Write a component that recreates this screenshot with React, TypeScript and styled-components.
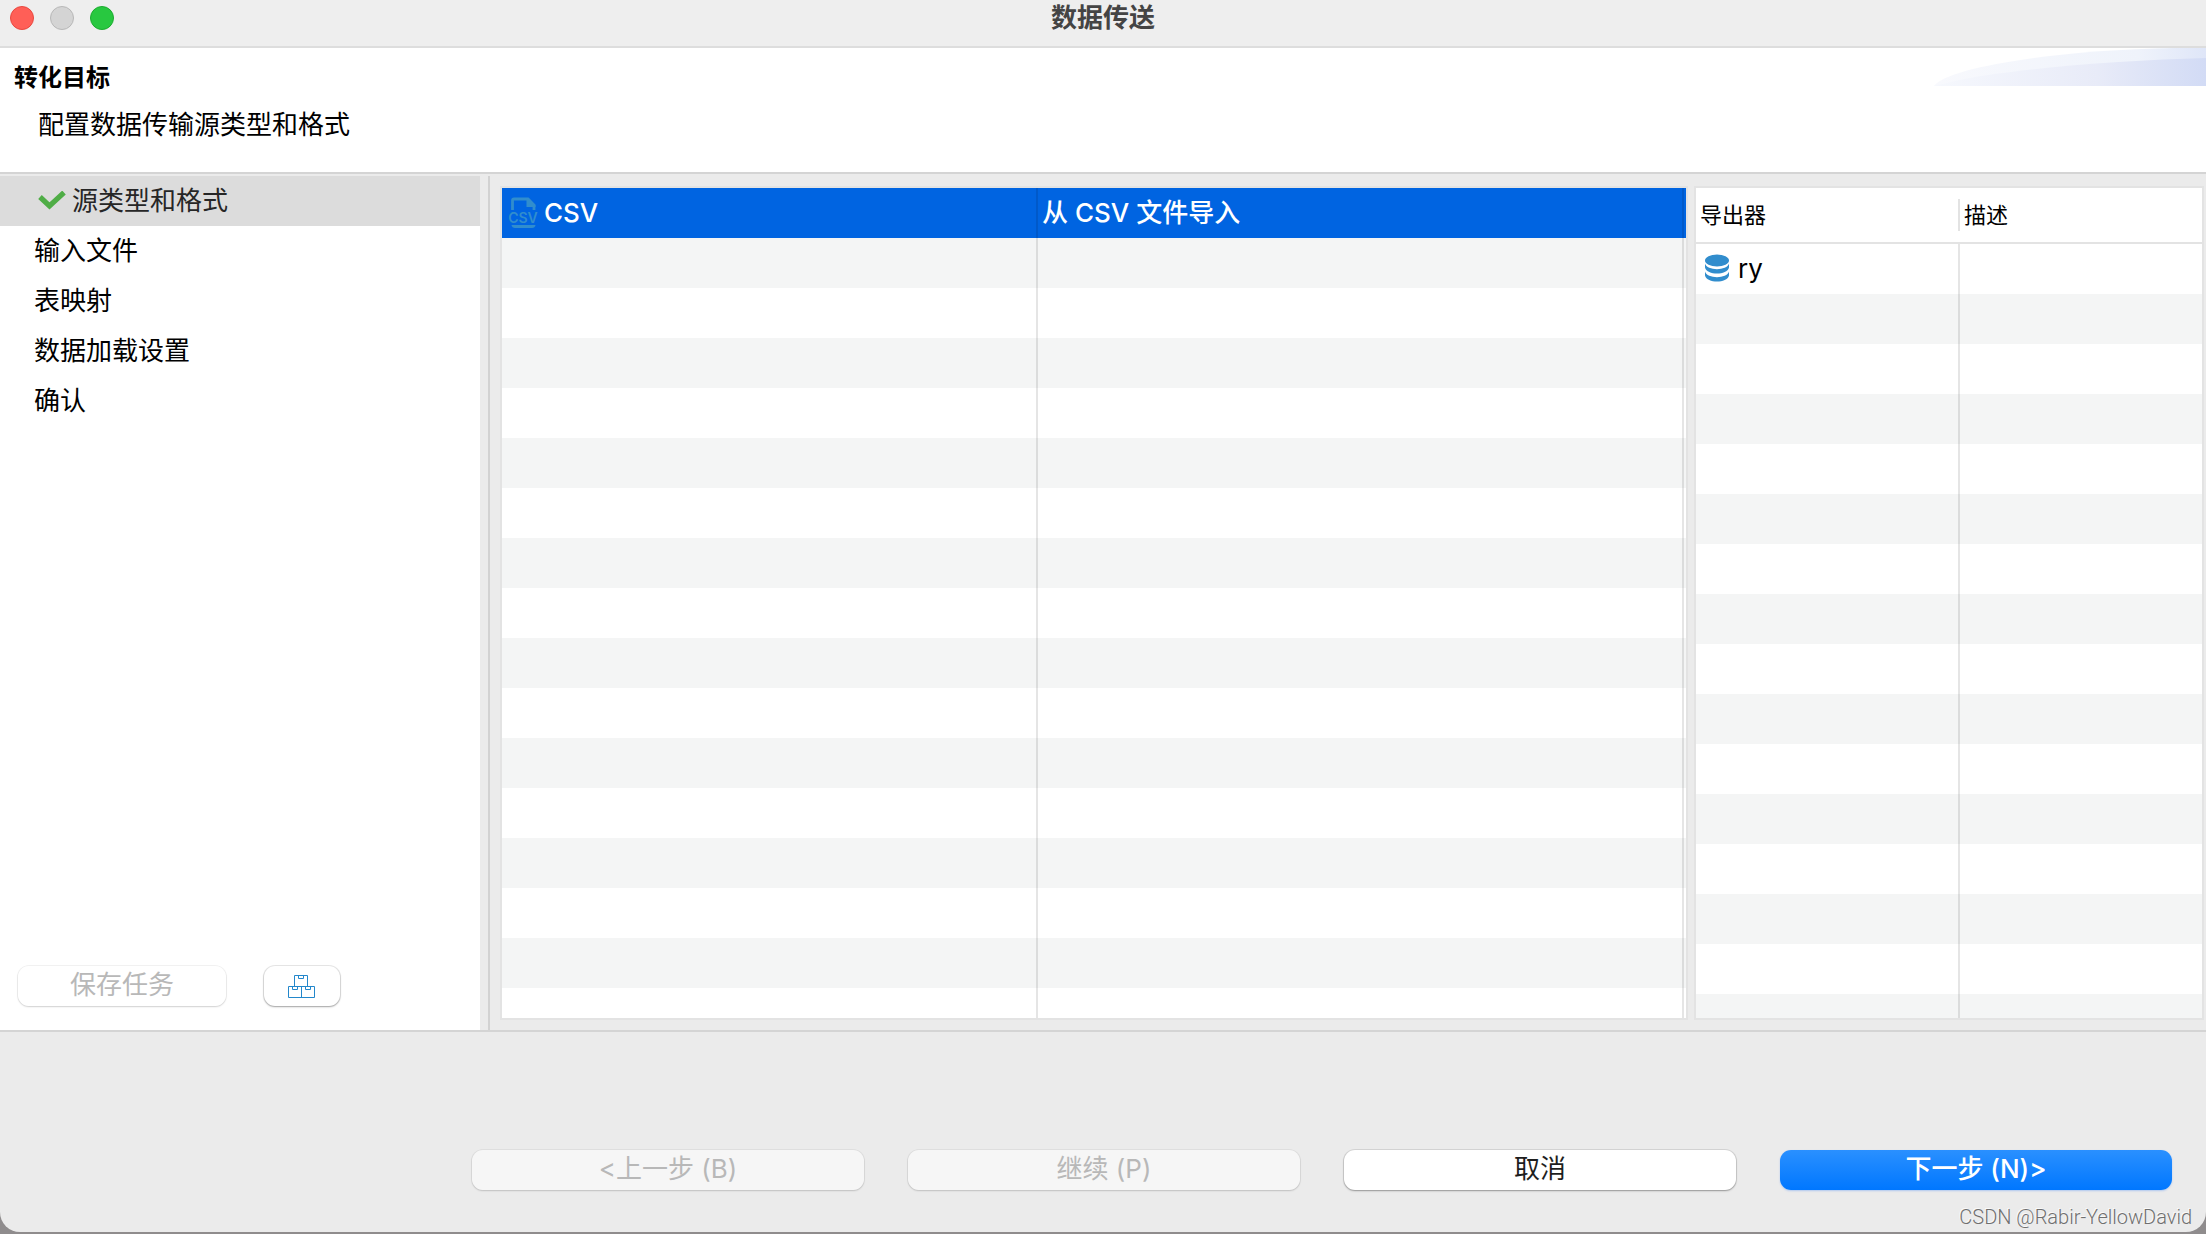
import React from "react";
import styled, { createGlobalStyle } from "styled-components";

const sans = `Inter, "Noto Sans CJK SC", sans-serif`;

const GlobalStyle = createGlobalStyle`
  *, *::before, *::after { box-sizing: border-box; }
  body {
    margin: 0;
    background: #8f8c8d;
    font-family: ${sans};
    font-size: 26px;
    line-height: 38px;
    color: #000;
  }
  button { font: inherit; }
`;

const Desktop = styled.div`
  height: 100vh;
  min-height: 640px;
  padding-bottom: 2px;
`;

const Window = styled.main`
  display: flex;
  flex-direction: column;
  height: 100%;
  overflow: hidden;
  background: #ebebeb;
  border-radius: 0 0 20px 20px;
`;

const TitleBar = styled.header`
  display: grid;
  grid-template-columns: 1fr auto 1fr;
  align-items: start;
  height: 48px;
  flex: none;
  background: #eeeeee;
  border-bottom: 2px solid #dddddd;
`;

const Lights = styled.div`
  display: flex;
  gap: 16px;
  padding: 6px 10px;
`;

const Light = styled.button<{ $fill: string; $edge: string }>`
  width: 24px;
  height: 24px;
  padding: 0;
  border: 1px solid ${(p) => p.$edge};
  border-radius: 50%;
  background: ${(p) => p.$fill};
`;

const WindowTitle = styled.h1`
  margin: 0;
  font-size: 26px;
  line-height: 36px;
  font-weight: 700;
  color: #444444;
`;

const Banner = styled.section`
  display: flex;
  justify-content: space-between;
  height: 126px;
  flex: none;
  background: #ffffff;
  border-bottom: 2px solid #d4d4d4;
`;

const BannerText = styled.div`
  padding: 12px 14px;
`;

const BannerTitle = styled.h2`
  margin: 0;
  font-size: 24px;
  line-height: 36px;
  font-weight: 700;
`;

const BannerNote = styled.p`
  margin: 10px 0 0;
  padding-left: 24px;
`;

const Swoosh = styled.svg`
  width: 272px;
  height: 38px;
  flex: none;
`;

const Body = styled.div`
  display: flex;
  flex: 1;
  min-height: 0;
  border-bottom: 2px solid #d4d4d4;
`;

const Sidebar = styled.aside`
  display: flex;
  flex-direction: column;
  justify-content: space-between;
  width: 480px;
  flex: none;
  margin-top: 2px;
  background: #ffffff;
`;

const Steps = styled.ol`
  margin: 0;
  padding: 0;
  list-style: none;
`;

const Step = styled.li<{ $current?: boolean }>`
  display: flex;
  align-items: center;
  gap: 6px;
  height: 50px;
  padding-left: ${(p) => (p.$current ? 38 : 34)}px;
  background: ${(p) => (p.$current ? "#dcdcdc" : "transparent")};
  color: ${(p) => (p.$current ? "#262626" : "#000000")};
`;

const TaskBar = styled.div`
  display: flex;
  gap: 38px;
  padding: 0 18px 24px;
`;

const Button = styled.button<{ $kind?: "primary" | "plain"; $width: number }>`
  display: flex;
  align-items: center;
  justify-content: center;
  width: ${(p) => p.$width}px;
  height: 40px;
  padding: 0 0 2px;
  border: 0;
  border-radius: 11px;
  color: ${(p) => (p.$kind === "primary" ? "#ffffff" : "#1e1e1e")};
  font-weight: ${(p) => (p.$kind === "primary" ? 500 : 400)};
  background: ${(p) =>
    p.$kind === "primary" ? "linear-gradient(#2a90ff, #0077ff)" : "#ffffff"};
  box-shadow: ${(p) =>
    p.$kind === "primary"
      ? "0 1px 2px rgba(0, 100, 255, 0.25)"
      : "0 0 0 1px rgba(0, 0, 0, 0.09), 0 1px 2px rgba(0, 0, 0, 0.3)"};

  &:disabled {
    color: #b8b8b8;
    background: rgba(255, 255, 255, 0.55);
    box-shadow: 0 0 0 1px rgba(0, 0, 0, 0.05), 0 1px 2px rgba(0, 0, 0, 0.14);
  }
`;

const Divider = styled.div`
  width: 10px;
  flex: none;
  margin-top: 2px;
  border-right: 2px solid #d2d2d2;
`;

const Panes = styled.div`
  display: flex;
  flex: 1;
  gap: 6px;
  min-width: 0;
  padding: 12px 2px 10px 10px;
`;

const Pane = styled.section<{ $grow?: boolean }>`
  flex: ${(p) => (p.$grow ? "1 1 0" : "0 0 510px")};
  min-width: 0;
  overflow: hidden;
  border: 2px solid #e3e3e3;
  background: #ffffff;
`;

const Table = styled.table`
  width: 100%;
  table-layout: fixed;
  border-collapse: separate;
  border-spacing: 0;
`;

const Col = styled.col<{ $width?: number }>`
  width: ${(p) => (p.$width ? `${p.$width}px` : "auto")};
`;

const HeadCell = styled.th`
  height: 56px;
  padding: 0;
  border-bottom: 2px solid #e3e3e3;
  font-size: 22px;
  line-height: 32px;
  font-weight: 400;
  text-align: left;
`;

const HeadLabel = styled.div<{ $divided?: boolean }>`
  padding-left: 4px;
  border-left: ${(p) => (p.$divided ? "2px solid #e3e3e3" : "0")};
`;

const Row = styled.tr<{ $tone: "selected" | "white" | "stripe" }>`
  color: ${(p) => (p.$tone === "selected" ? "#ffffff" : "#000000")};
  font-weight: ${(p) => (p.$tone === "selected" ? 500 : 400)};
  background: ${(p) =>
    ({ selected: "#0064e1", white: "#ffffff", stripe: "#f4f5f5" })[p.$tone]};
`;

const Cell = styled.td`
  height: 50px;
  padding: 0 4px;
  white-space: nowrap;

  & + & {
    border-left: 2px solid rgba(0, 0, 0, 0.1);
  }
  &:empty {
    padding: 0;
  }
`;

const Entry = styled.div<{ $inset: number; $gap: number }>`
  display: flex;
  align-items: center;
  gap: ${(p) => p.$gap}px;
  padding-left: ${(p) => p.$inset}px;
`;

const Footer = styled.footer`
  display: flex;
  flex-direction: column;
  align-items: flex-end;
  flex: none;
  height: 200px;
  padding: 118px 14px 0;
`;

const Actions = styled.div`
  display: flex;
  gap: 44px;
  padding-right: 20px;
`;

const Watermark = styled.div`
  margin-top: 14px;
  font-family: Roboto, "Liberation Sans", sans-serif;
  font-size: 20px;
  line-height: 26px;
  font-weight: 300;
  color: #6f6f6f;
  text-shadow: -1px -1px 0 #fafafa;
`;

const CheckIcon = () => (
  <svg width="28" height="20" viewBox="0 0 28 20" aria-hidden="true">
    <path d="M2 6 L11.500 15 L26 1.500" fill="none" stroke="#4fad46" strokeWidth="5.200" />
  </svg>
);

const CsvIcon = () => (
  <svg width="30" height="32" viewBox="0 0 30 32" aria-hidden="true">
    <path d="M4.500 13 V3.500 Q4.500 2 6 2 H20 L26 8 V13" fill="none" stroke="#318dcd" strokeWidth="2.800" />
    <path d="M18.500 1 H20.500 L27.500 8 V10 H18.500 Z" fill="#318dcd" />
    <path d="M3.500 28 H27.500 Q27 31 24 31 H7 Q4 31 3.500 28 Z" fill="#318dcd" />
    <text x="15" y="26" textAnchor="middle" fontFamily={sans} fontSize="14" fontWeight="600" fill="#318dcd">CSV</text>
  </svg>
);

const DatabaseIcon = () => (
  <svg width="26" height="30" viewBox="0 0 26 30" fill="#318dcd" aria-hidden="true">
    <ellipse cx="13" cy="6.500" rx="12" ry="6" />
    <path d="M1 9.500 C3 17 23 17 25 9.500 V13.500 C23 21.500 3 21.500 1 13.500 Z" />
    <path d="M1 17.500 C3 25 23 25 25 17.500 V21.500 C23 29.500 3 29.500 1 21.500 Z" />
  </svg>
);

const BoxesIcon = () => (
  <svg width="28" height="28" viewBox="1 -4 28 28" fill="none" stroke="#2387cb" aria-hidden="true">
    <path d="M7.500 11.500 V0.500 H20.500 V11.500 M11.500 0.500 V3.500 H16.500 V0.500" />
    <path d="M1.500 11.500 H27.500 V22.500 H1.500 Z M14.500 11.500 V22.500" />
    <path d="M5.500 11.500 V14.500 H10.500 V11.500 M18.500 11.500 V14.500 H23.500 V11.500" />
  </svg>
);

const steps = ["输入文件", "表映射", "数据加载设置", "确认"];
const fillers = Array.from({ length: 40 }, (_, i) => i);

export default function App() {
  return (
    <>
      <GlobalStyle />
      <Desktop>
        <Window>
          <TitleBar>
            <Lights>
              <Light $fill="#ff5f57" $edge="#e9483f" aria-label="关闭" />
              <Light $fill="#d4d4d4" $edge="#b8b8b8" aria-label="最小化" />
              <Light $fill="#28c840" $edge="#1cac2f" aria-label="缩放" />
            </Lights>
            <WindowTitle>数据传送</WindowTitle>
          </TitleBar>

          <Banner>
            <BannerText>
              <BannerTitle>转化目标</BannerTitle>
              <BannerNote>配置数据传输源类型和格式</BannerNote>
            </BannerText>
            <Swoosh viewBox="0 0 272 38" preserveAspectRatio="none" aria-hidden="true">
              <defs>
                <linearGradient id="outer">
                  <stop offset="0" stopColor="#f8f9fd" />
                  <stop offset="0.750" stopColor="#eff3fb" />
                  <stop offset="1" stopColor="#dfe6f8" />
                </linearGradient>
                <linearGradient id="inner">
                  <stop offset="0" stopColor="#f6f8fd" />
                  <stop offset="0.600" stopColor="#e8ebf8" />
                  <stop offset="1" stopColor="#d2dbf5" />
                </linearGradient>
              </defs>
              <path d="M0 38 C12 20 120 2 240 0 H272 V38 Z" fill="url(#outer)" />
              <path d="M30 31 C90 20 190 12 272 10 V38 H0 Z" fill="url(#inner)" />
            </Swoosh>
          </Banner>

          <Body>
            <Sidebar>
              <Steps>
                <Step $current aria-current="step">
                  <CheckIcon />
                  源类型和格式
                </Step>
                {steps.map((name) => (
                  <Step key={name}>{name}</Step>
                ))}
              </Steps>
              <TaskBar>
                <Button $width={208} disabled>保存任务</Button>
                <Button $width={76} aria-label="任务">
                  <BoxesIcon />
                </Button>
              </TaskBar>
            </Sidebar>
            <Divider />
            <Panes>
              <Pane $grow>
                <Table>
                  <colgroup>
                    <Col $width={534} />
                    <Col />
                    <Col $width={4} />
                  </colgroup>
                  <tbody>
                    <Row $tone="selected">
                      <Cell>
                        <Entry $inset={2} $gap={6}>
                          <CsvIcon />
                          CSV
                        </Entry>
                      </Cell>
                      <Cell>从 CSV 文件导入</Cell>
                      <Cell />
                    </Row>
                    {fillers.map((i) => (
                      <Row key={i} $tone={i % 2 ? "white" : "stripe"}>
                        <Cell />
                        <Cell />
                        <Cell />
                      </Row>
                    ))}
                  </tbody>
                </Table>
              </Pane>
              <Pane>
                <Table>
                  <colgroup>
                    <Col $width={262} />
                    <Col />
                  </colgroup>
                  <thead>
                    <tr>
                      <HeadCell scope="col">
                        <HeadLabel>导出器</HeadLabel>
                      </HeadCell>
                      <HeadCell scope="col">
                        <HeadLabel $divided>描述</HeadLabel>
                      </HeadCell>
                    </tr>
                  </thead>
                  <tbody>
                    <Row $tone="white">
                      <Cell>
                        <Entry $inset={4} $gap={8}>
                          <DatabaseIcon />
                          ry
                        </Entry>
                      </Cell>
                      <Cell />
                    </Row>
                    {fillers.map((i) => (
                      <Row key={i} $tone={i % 2 ? "white" : "stripe"}>
                        <Cell />
                        <Cell />
                      </Row>
                    ))}
                  </tbody>
                </Table>
              </Pane>
            </Panes>
          </Body>

          <Footer>
            <Actions>
              <Button $width={392} disabled>&lt;上一步 (B)</Button>
              <Button $width={392} disabled>继续 (P)</Button>
              <Button $width={392}>取消</Button>
              <Button $width={392} $kind="primary">下一步 (N)&gt;</Button>
            </Actions>
            <Watermark>CSDN @Rabir-YellowDavid</Watermark>
          </Footer>
        </Window>
      </Desktop>
    </>
  );
}
